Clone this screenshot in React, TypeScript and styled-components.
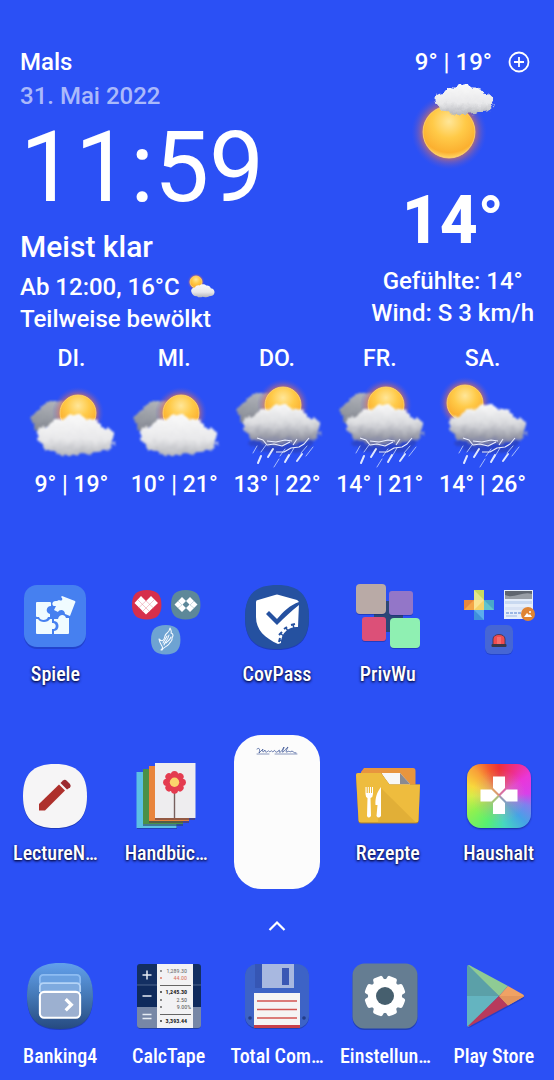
import React from "react";
import styled, { createGlobalStyle } from "styled-components";

const GlobalStyle = createGlobalStyle`
  *, *::before, *::after { box-sizing: border-box; }
  html, body { margin: 0; padding: 0; background: #2b50f5; }
  body { font-family: Roboto, "Liberation Sans", sans-serif; color: #fff; }
`;

/* ---------- layout ---------- */

const Screen = styled.main`
  display: flex;
  flex-direction: column;
  min-height: 100vh;
  padding: 45px 0 11px;
  background: #2b50f5;
`;

const Weather = styled.section`
  display: flex;
  flex-direction: column;
  gap: 8px;
  padding: 0 20px;
`;

const Current = styled.div`
  display: flex;
  justify-content: space-between;
`;

const Place = styled.div`
  display: flex;
  flex-direction: column;
`;

const Conditions = styled.div`
  display: flex;
  flex-direction: column;
  align-items: center;
`;

const Line = styled.p<{ $size?: number; $height?: number; $weight?: number; $faded?: boolean }>`
  display: flex;
  align-items: center;
  gap: 8px;
  margin: 0;
  font-size: ${(p) => p.$size ?? 24}px;
  line-height: ${(p) => p.$height ?? 32}px;
  font-weight: ${(p) => p.$weight ?? 500};
  color: ${(p) => (p.$faded ? "#aab9fb" : "#fff")};
  white-space: nowrap;
`;

const Clock = styled.time`
  font-size: 98px;
  line-height: 110px;
  font-weight: 400;
`;

const RangeRow = styled.div`
  display: flex;
  align-items: center;
  align-self: flex-end;
  gap: 16px;
  height: 34px;
  padding-right: 4px;
`;

const IconButton = styled.button`
  display: flex;
  padding: 0;
  border: 0;
  background: none;
  color: inherit;
  cursor: pointer;
`;

const Forecast = styled.ul`
  display: grid;
  grid-template-columns: repeat(5, 1fr);
  margin: 0;
  padding: 0;
  list-style: none;
`;

const Day = styled.li`
  display: flex;
  flex-direction: column;
  align-items: center;
`;

const AppGrid = styled.section`
  display: flex;
  flex-direction: column;
  gap: 49px;
  padding-top: 80px;
`;

const AppRow = styled.div`
  display: grid;
  grid-template-columns: repeat(5, 1fr);
  align-items: center;
`;

const Dock = styled.nav`
  display: grid;
  grid-template-columns: repeat(5, 1fr);
  padding: 0 6px;
`;

const AppButton = styled.button<{ $dock?: boolean }>`
  display: flex;
  flex-direction: column;
  align-items: center;
  gap: ${(p) => (p.$dock ? 15 : 13)}px;
  min-width: 0;
  padding: ${(p) => (p.$dock ? 0 : 4)}px 0 0;
  border: 0;
  background: none;
  color: #fff;
  font-family: "Roboto Condensed", "Liberation Sans Narrow", Roboto, sans-serif;
  font-size: 20px;
  font-weight: 500;
  line-height: 24px;
  text-shadow: ${(p) => (p.$dock ? "none" : "0 1px 3px rgba(0, 0, 40, 0.9), 0 1px 2px rgba(0, 0, 40, 0.5)")};
  cursor: pointer;
`;

const Label = styled.span`
  height: 24px;
  white-space: nowrap;
`;

const Art = styled.svg`
  display: block;
  overflow: visible;
`;

const HueTile = styled.span`
  display: block;
  width: 64px;
  height: 64px;
  border-radius: 14px;
  background:
    radial-gradient(circle, rgba(200, 160, 150, 0.7) 0, rgba(200, 160, 150, 0) 60%),
    conic-gradient(from 0deg, #ee3038, #ee2f90 32deg, #ea36d8 55deg, #d840ea 85deg, #7f80ee 108deg, #46a2e6 135deg, #46d8c0 170deg, #58f070 205deg, #90f050 240deg, #d8ec48 270deg, #f8d83c 290deg, #f8a038 318deg, #f4582f 340deg, #ee3038);
  box-shadow: 0 1px 2px rgba(0, 0, 40, 0.45);
`;

const NoteWidget = styled.button`
  justify-self: center;
  display: flex;
  justify-content: center;
  width: 86px;
  height: 154px;
  padding: 11px 0 0;
  border: 0;
  border-radius: 27px;
  background: #fcfcfc;
  cursor: pointer;
`;

const Drawer = styled.button`
  display: flex;
  align-items: center;
  justify-content: center;
  height: 74px;
  padding: 0;
  border: 0;
  background: none;
  cursor: pointer;
`;

const DefsSvg = styled.svg`
  display: block;
`;

/* ---------- weather drawings ---------- */

const Defs = () => (
  <DefsSvg width="0" height="0" aria-hidden="true">
    <defs>
      <radialGradient id="sun" cx="50%" cy="30%" r="70%">
        <stop offset="0" stopColor="#ffe698" />
        <stop offset="0.45" stopColor="#ffca48" />
        <stop offset="0.85" stopColor="#fbb030" />
        <stop offset="1" stopColor="#ffd665" />
      </radialGradient>
      <radialGradient id="glow">
        <stop offset="0.6" stopColor="#f0812e" stopOpacity="0.95" />
        <stop offset="0.78" stopColor="#c06a78" stopOpacity="0.45" />
        <stop offset="1" stopColor="#5a58d0" stopOpacity="0" />
      </radialGradient>
      <linearGradient id="white" x1="0" y1="0" x2="0" y2="1">
        <stop offset="0" stopColor="#fafafa" />
        <stop offset="0.6" stopColor="#e8e8ea" />
        <stop offset="1" stopColor="#b2b4ba" />
      </linearGradient>
      <linearGradient id="storm" x1="0" y1="0" x2="0" y2="1">
        <stop offset="0" stopColor="#fafafa" />
        <stop offset="0.45" stopColor="#dadbde" />
        <stop offset="0.78" stopColor="#9a9ca8" />
        <stop offset="1" stopColor="#646ca8" />
      </linearGradient>
      <linearGradient id="grey" x1="0" y1="0" x2="0" y2="1">
        <stop offset="0" stopColor="#b4b7bc" />
        <stop offset="1" stopColor="#848892" />
      </linearGradient>
      <filter id="fluff" x="-10%" y="-15%" width="120%" height="130%" colorInterpolationFilters="sRGB">
        <feTurbulence type="fractalNoise" baseFrequency="0.14" numOctaves="3" seed="4" result="n" />
        <feDisplacementMap in="SourceGraphic" in2="n" scale="7" xChannelSelector="R" yChannelSelector="G" result="d" />
        <feGaussianBlur in="d" stdDeviation="1" />
      </filter>
    </defs>
  </DefsSvg>
);

const Sun = ({ x, y, r }: { x: number; y: number; r: number }) => (
  <g>
    <circle cx={x} cy={y} r={r * 1.45} fill="url(#glow)" />
    <circle cx={x} cy={y} r={r} fill="url(#sun)" stroke="#ffd873" strokeWidth="0.8" />
  </g>
);

const CLOUD =
  "M1 24 C-1 17 5 12 13 12 C16 5 23 3 28 5 C34 -1 46 -1 51 5 C58 4 64 7 66 13 C75 14 80 21 78 28 C77 35 69 38 61 38 C54 42 44 42 39 40 C31 43 24 42 20 38 C11 39 3 33 1 24Z";

type Sky = "cloudy" | "stormy" | "sunnyStorm";

const WeatherIcon = ({ kind }: { kind: Sky }) => {
  const rain = kind !== "cloudy";
  return (
    <Art width="94" height="94" viewBox="0 -2 94 94" role="img" aria-label={rain ? "Gewitter" : "Bewölkt"}>
      {kind !== "sunnyStorm" && (
        <path
          transform={rain ? "translate(0 -8)" : undefined}
          d="M8 46 C5 38 11 34 17 33 C19 25 27 23 34 23 C42 22 45 30 42 38 C40 48 28 48 22 51 C16 56 8 52 8 46Z"
          fill="url(#grey)"
          filter="url(#fluff)"
        />
      )}
      {kind === "cloudy" && <Sun x={54} y={36} r={18} />}
      {kind === "stormy" && <Sun x={53} y={28} r={18} />}
      {kind === "sunnyStorm" && <Sun x={29} y={26} r={18} />}
      {rain ? (
        <>
          <ellipse cx="52" cy="66" rx="32" ry="10" fill="#2c3fae" opacity="0.6" filter="url(#fluff)" />
          <path transform="translate(12 27)" d={CLOUD} fill="url(#storm)" filter="url(#fluff)" />
          <g stroke="#a8bcfa" strokeLinecap="round" fill="none">
            <path strokeWidth="1" d="M27 69 L23 76 M36 68 L31 75 M55 72 L50 79 M77 69 L71 76 M83 70 L76 79 M64 71 L58 81 M49 82 L44 90" />
            <path stroke="#e0e8ff" strokeWidth="2" d="M31 79 L28 86 M43 72 L38 80 M59 78 L55 85 M72 77 L67 84" />
          </g>
          <path
            d="M27 61 L33 63 L37 68 L44 67 L52 69 L60 65 M37 64 L46 65 L55 63 L62 64 M79 61 L74 67 L69 70 L61 71 L54 75 L46 75 M67 62 L63 68"
            fill="none"
            stroke="#eceffe"
            strokeWidth="1.1"
            strokeLinejoin="round"
          />
        </>
      ) : (
        <path transform="translate(12 37)" d={CLOUD} fill="url(#white)" filter="url(#fluff)" />
      )}
    </Art>
  );
};

const CurrentSky = () => (
  <Art width="110" height="98" viewBox="0 0 110 98" role="img" aria-label="Meist klar">
    <Sun x={51} y={53} r={26} />
    <path transform="translate(36 5) scale(0.76 0.74)" d={CLOUD} fill="url(#white)" filter="url(#fluff)" />
  </Art>
);

const MiniSky = () => (
  <Art width="28" height="24" viewBox="0 0 28 24" aria-hidden="true">
    <Sun x={8} y={7} r={6} />
    <path transform="translate(3 9) scale(0.3 0.32)" d={CLOUD} fill="url(#white)" />
  </Art>
);

/* ---------- app drawings ---------- */

const SQUIRCLE = "M32 0 C54 0 64 10 64 32 C64 54 54 64 32 64 C10 64 0 54 0 32 C0 10 10 0 32 0Z";

const Shade = () => <path d={SQUIRCLE} transform="translate(0 1)" fill="#10207a" opacity="0.45" />;

const SpieleArt = () => (
  <Art width="64" height="64" viewBox="0 0 64 64">
    <rect x="1" y="1" width="62" height="63" rx="13" fill="#1d3bb4" opacity="0.6" />
    <rect x="1" y="0" width="62" height="62" rx="13" fill="#4680f0" />
    <g fill="#f0fbff">
      <path d="M14 17 H27 Q28 17 28 18 V21 C23 21 22 28 27 29 V32 H25 C24 36 17 36 16 32 H14 Q13 32 13 31 V18 Q13 17 14 17Z" />
      <path d="M13 34 H15 C17 38 25 38 27 34 H29 V38 C34 37 34 45 29 44 V49 H14 Q13 49 13 48Z" />
      <path d="M31 36 V34 H35 C36 29 42 29 43 33 H46 V48 Q46 49 45 49 H31 V46 C37 46 37 36 31 36Z" />
      <path d="M39 11 L52 16 Q53 17 52 18 L47 31 L42 29 C42 24 36 24 35 27 L31 25 L33 21 C28 22 28 15 34 16 L36 15 C40 17 40 13 38 12Z" />
    </g>
  </Art>
);

const GamesFolderArt = () => (
  <Art width="64" height="64" viewBox="0 0 64 64">
    <path d={SQUIRCLE} transform="translate(-2 5) scale(0.46)" fill="#d62f4c" />
    <path d="M7 11 L12 16 L17 11 L24 18 L12 29.5 L0.5 18Z" fill="#fff" />
    <path
      d="M3.500 14.500 L15.500 26.500 M8 12 L19.500 23 M12 12 M20.500 14.500 L8.500 26.500 M16 12 L4.500 23"
      fill="none"
      stroke="#e58a9b"
      strokeWidth="0.5"
    />
    <path d={SQUIRCLE} transform="translate(37 5) scale(0.46)" fill="#5d8899" />
    <path
      d="M40.500 19.500 L48 12 L52 16 L48.500 19.500 L52 23 L48 27Z M52 16 L56 12 L63.500 19.500 L56 27 L52 23 L55.500 19.500Z"
      fill="#fff"
    />
    <path d="M44 16 L48 20 L44 23 M60 16 L56 20 L60 23" fill="none" stroke="#9db9c2" strokeWidth="0.5" />
    <path d={SQUIRCLE} transform="translate(17 40) scale(0.46)" fill="#6ea3d2" />
    <g fill="none" stroke="#f4faff" strokeWidth="1.1" strokeLinecap="round" strokeLinejoin="round">
      <path d="M27 65 C31 62 26 61 25 54 C28 57 30 56 31 51 C32 47 35 49 36 43 C38 47 37 48 37 48 C40 49 39 51 38 53 C39 56 36 57 35 59 C33 62 29 62 28 65" />
      <path d="M30 60 C31 56 34 55 35 50 M32 58 C34 56 36 55 37 52 M29 58 C30 56 32 53 33 51" />
    </g>
  </Art>
);

const CovPassArt = () => (
  <Art width="64" height="64" viewBox="0 0 64 64">
    <Shade />
    <path d={SQUIRCLE} fill="#2551a0" />
    <path
      d="M30 10 Q32 9 34 10 L52 15 Q54 16 54 18 L53 42 C46 41 36 46 36 58 L33 59 C20 53 11 45 11 32 V17 Q11 15 13 15Z"
      fill="#fff"
    />
    <path d="M21 29 L24 26 L32 34 C38 27 45 20 54 17 V20 C46 26 39 33 32 40Z" fill="#2551a0" />
    <g stroke="#2551a0" strokeWidth="1.4" fill="none">
      <path d="M38 57 L35 55 M39 51 L36 49 M43 46 L41 43 M49 43 L48 40" />
      <path strokeWidth="2" d="M34 57 L35 53 M34 50 L37 47 M39 44 L42 42 M46 40 L50 39" />
    </g>
  </Art>
);

const PrivWuArt = () => (
  <Art width="64" height="64" viewBox="0 0 64 64">
    <path d="M28 16 H38 V26 H47 V36 H38 V47 H28 V36 H18 V26 H28Z" fill="#2c4776" />
    <g fill="#10207a" opacity="0.4">
      <rect x="0" y="1" width="30" height="29" rx="4" />
      <rect x="33" y="8" width="24" height="23" rx="3" />
      <rect x="6" y="34" width="24" height="23" rx="3" />
      <rect x="34" y="35" width="30" height="29" rx="4" />
    </g>
    <rect x="0" y="-1" width="30" height="30" rx="4" fill="#b9aaa6" />
    <rect x="33" y="6" width="24" height="24" rx="3" fill="#9376c8" />
    <rect x="6" y="32" width="24" height="24" rx="3" fill="#dc5078" />
    <rect x="34" y="33" width="30" height="30" rx="4" fill="#8ff0b2" />
  </Art>
);

const ToolsFolderArt = () => (
  <Art width="64" height="64" viewBox="0 0 64 64">
    <rect x="7" y="5" width="10" height="10" fill="#c8d860" />
    <path d="M7 5 L17 15 H7Z" fill="#e2e58a" />
    <rect x="-3" y="15" width="10" height="10" fill="#e8883c" />
    <path d="M-3 25 L7 15 V25Z" fill="#f4a648" />
    <rect x="7" y="15" width="10" height="10" fill="#fbe492" />
    <path d="M7 25 L17 15 V25Z" fill="#f6d468" />
    <rect x="17" y="15" width="10" height="10" fill="#4aa8c8" />
    <path d="M17 15 L27 25 H17Z" fill="#62c4cc" />
    <rect x="7" y="25" width="10" height="10" fill="#3f90dc" />
    <path d="M7 25 L17 35 V25Z" fill="#5cacec" />

    <rect x="37" y="5" width="29" height="29" fill="#e6eefa" />
    <rect x="38" y="6" width="27" height="8" fill="#5f6670" />
    <path d="M38 10 C46 14 56 6 65 9 V14 H38Z" fill="#989ea6" />
    <rect x="38" y="16" width="27" height="3" fill="#c9d9f0" />
    <rect x="38" y="22" width="20" height="3" fill="#d8e2f4" />
    <path d="M39 28 H56" stroke="#4f7ed0" strokeWidth="1" strokeDasharray="3 1" />
    <path d="M39 31 H50" stroke="#9db9e4" strokeWidth="1" />
    <circle cx="61" cy="29" r="7" fill="#e08432" />
    <path d="M57 32 L60 28 L62 30 L63 29 L65 32Z" fill="#fff" />
    <circle cx="63" cy="27" r="1" fill="#fff" />

    <rect x="18" y="41" width="28" height="29" rx="6" fill="#1c37a6" opacity="0.5" />
    <rect x="18" y="40" width="28" height="29" rx="6" fill="#4666d4" />
    <path d="M26 60 V54 C26 48 38 48 38 54 V60Z" fill="#f04c50" stroke="#39324a" strokeWidth="0.8" />
    <path d="M31 52 V60 M33 52 V60" stroke="#ff9a98" strokeWidth="0.8" />
    <rect x="24.5" y="59" width="15" height="3" rx="1" fill="#39384a" />
  </Art>
);

const LectureArt = () => (
  <Art width="64" height="64" viewBox="0 0 64 64">
    <Shade />
    <path d={SQUIRCLE} fill="#f6f5f6" />
    <path d="M16 40 L36 20.500 L42 26.500 L22 46.500 H16Z" fill="#ae302c" />
    <path d="M37.500 19 L40 16.500 Q42 15 44 17 L47 20 Q48.500 22 47 23.500 L44 25.500Z" fill="#9c2a30" />
  </Art>
);

const HandbookArt = () => (
  <Art width="64" height="64" viewBox="0 0 64 64">
    <rect x="3" y="9" width="40" height="56" fill="#183078" opacity="0.5" />
    <rect x="2.5" y="8" width="40" height="56" fill="#5cc0e4" />
    <rect x="9" y="5" width="40" height="57" fill="#2b4860" opacity="0.6" />
    <rect x="9" y="5" width="40" height="55" fill="#4a9048" />
    <rect x="15" y="2" width="40" height="57" fill="#5a3c48" opacity="0.6" />
    <rect x="15" y="2" width="40" height="55" fill="#e8843c" />
    <rect x="21" y="-1" width="40" height="57" fill="#5a3c48" opacity="0.6" />
    <rect x="21" y="-1" width="40.5" height="55" fill="#eeedef" />
    <path d="M40.500 24 V54" stroke="#77605e" strokeWidth="1.4" />
    <g fill="#e43c50">
      {[0, 45, 90, 135, 180, 225, 270, 315].map((a) => (
        <circle key={a} cx="40.5" cy="10.5" r="3.600" transform={`rotate(${a} 40.5 18.3)`} />
      ))}
      <circle cx="40.5" cy="18.3" r="8" />
    </g>
    <circle cx="40.5" cy="18.3" r="4.7" fill="#fbd46c" />
  </Art>
);

const RecipesArt = () => (
  <Art width="64" height="64" viewBox="0 0 64 64">
    <path d="M8 4 H57 Q59.500 4 59.500 7 V24 H5 V8Z" fill="#e8953e" />
    <path d="M25.500 9 H44 L54 20 V24 H34Z" fill="#f7f7f7" />
    <path d="M44 9 L54 20 H44Z" fill="#8a8a90" />
    <path d="M0 11 Q0 9 2 9 H25 L33.500 20.500 H64 L62.500 57 Q62.500 59.500 60 59.500 H5 Q2.500 59.500 2.500 57Z" fill="#a87a2a" />
    <path d="M0 11 Q0 9 2 9 H25 L33.500 20.500 H64 L62.500 56 Q62.500 58.500 60 58.500 H5 Q2.500 58.500 2.500 56Z" fill="#eebc3e" />
    <path d="M25 24 L60 58.500 H22 L23 26Z" fill="#d9a634" opacity="0.6" />
    <path
      d="M9.500 23 V30 Q9.500 33 11.500 34 L11 52 Q12.500 55 15 52 L14.500 34 Q17 33 17 30 V23 H16 V29 H15 V23 H14 V29 H12.800 V23 H11.800 V29 H10.600 V23Z"
      fill="#fff"
    />
    <path d="M25 23 C21 28 19 34 19.500 41 H21.500 L20.500 52 Q22.500 55 25 52Z" fill="#fff" />
  </Art>
);

const HouseholdArt = () => (
  <HueTile>
    <Art width="64" height="64" viewBox="0 0 64 64">
      <path
        fill="#fff"
        d="M26 12.500 H38 V24 L32 30 L26 24Z M26 50 V39 L32 33 L38 39 V50Z M13.500 25.500 H24.500 L30.500 31.500 L24.500 37.500 H13.500Z M50.500 25.500 V37.500 H39.500 L33.500 31.500 L39.500 25.500Z"
      />
    </Art>
  </HueTile>
);

const BankingArt = () => (
  <Art width="66" height="66" viewBox="0 0 64 64">
    <defs>
      <linearGradient id="bank" x1="0" y1="0" x2="0" y2="1">
        <stop offset="0" stopColor="#62a0ec" />
        <stop offset="0.5" stopColor="#4478b6" />
        <stop offset="1" stopColor="#264a80" />
      </linearGradient>
    </defs>
    <Shade />
    <path d={SQUIRCLE} fill="url(#bank)" />
    <path d="M12.500 20 V15 Q12.500 11.500 16 11.500 H48 Q51.500 11.500 51.500 15 V20" fill="#6aa0e0" stroke="#8dbcf2" strokeWidth="1.8" />
    <path d="M12.500 28 V23 Q12.500 19.500 16 19.500 H48 Q51.500 19.500 51.500 23 V28" fill="#7eaadf" stroke="#b4d3f6" strokeWidth="1.8" />
    <rect x="12.5" y="28" width="39" height="25" rx="4" fill="#9cb0d0" stroke="#fff" strokeWidth="2" />
    <path d="M37.500 35 L43 40.500 L37.500 46" fill="none" stroke="#fff" strokeWidth="3.2" />
  </Art>
);

const tape: [string, number, string, number][] = [
  ["1,289.30", 10, "#666", 400],
  ["44.00", 17, "#d8705c", 400],
  ["1,245.30", 31, "#222", 700],
  ["2.50", 39, "#555", 400],
  ["9.00%", 46, "#555", 400],
  ["3,393.44", 60, "#222", 700],
];

const CalcArt = () => (
  <Art width="66" height="66" viewBox="0 0 66 66">
    <rect x="1" y="2" width="64" height="64" rx="4" fill="#183078" opacity="0.6" />
    <path d="M1 22 V4 Q1 1 4 1 H62 Q65 1 65 4 V22Z" fill="#132f62" />
    <rect x="1" y="22" width="64" height="22" fill="#0f2a5c" />
    <path d="M1 44 H65 V62 Q65 65 62 65 H4 Q1 65 1 62Z" fill="#7787a6" />
    <path d="M1 22 H65" stroke="#5b7198" strokeWidth="0.8" />
    <path d="M6.500 12 H15.500 M11 7.500 V16.500 M6.500 33 H15.500 M6.500 51.500 H15.500 M6.500 55.500 H15.500" stroke="#e6ecf4" strokeWidth="1.5" />
    <rect x="21" y="1" width="36" height="64" fill="#f2f2f4" />
    {tape.map(([value, y, fill, weight]) => (
      <g key={y} fill={fill} fontFamily="Roboto Condensed, Roboto, sans-serif" fontSize="6" fontWeight={weight}>
        <text x={value.endsWith("%") ? 55 : 51} y={y} textAnchor="end">{value}</text>
        <circle cx="25" cy={y - 2} r="0.9" />
      </g>
    ))}
    <path d="M24 22.500 H55 M24 51.500 H55" stroke="#555" strokeWidth="0.9" />
  </Art>
);

const CommanderArt = () => (
  <Art width="66" height="66" viewBox="0 0 66 66">
    <rect x="1" y="2" width="64" height="64" rx="12" fill="#183078" opacity="0.5" />
    <rect x="1" y="1" width="64" height="64" rx="12" fill="#3d63c6" />
    <rect x="11" y="1" width="39" height="24" fill="#3656b4" />
    <rect x="18" y="1" width="32" height="24" fill="#a8b8e0" />
    <rect x="38" y="5" width="7" height="17" fill="#3a57b4" />
    <rect x="10" y="30" width="46" height="32" fill="#f5f4f4" />
    <rect x="10" y="62" width="46" height="3" fill="#c8404a" />
    <path d="M13 38 H53 M13 46.500 H53 M13 55 H53" stroke="#d25450" strokeWidth="1.7" />
    <circle cx="6" cy="55" r="1.8" fill="#223c88" />
    <circle cx="60" cy="55" r="1.8" fill="#223c88" />
  </Art>
);

const SettingsArt = () => (
  <Art width="66" height="66" viewBox="0 0 66 66">
    <rect x="0.5" y="2" width="65" height="65" rx="12" fill="#183078" opacity="0.5" />
    <rect x="0.5" y="0.5" width="65" height="65" rx="12" fill="#657d92" />
    <circle cx="33" cy="33" r="17" fill="#fff" />
    {[22.5, 67.5, 112.5, 157.5, 202.5, 247.5, 292.5, 337.5].map((a) => (
      <path
        key={a}
        transform={`rotate(${a} 33 33)`}
        d="M27 20 L28 14 Q28.500 12.800 29.500 12.700 Q33 12.300 36.500 12.700 Q37.500 12.800 38 14 L39 20Z"
        fill="#fff"
      />
    ))}
    <circle cx="33" cy="33" r="9" fill="#465f6e" />
  </Art>
);

const PlayArt = () => (
  <Art width="66" height="66" viewBox="0 0 66 66">
    <path d="M6 6 Q6 2 9 4 L62 32 Q64 34 62 36 L10 64 Q6 66 6 62Z" fill="#10207a" opacity="0.35" />
    <path d="M6 4 Q6 1 9 2.500 L38 33 H6Z" fill="#5ba0a8" />
    <path d="M6 33 H38 L9 63 Q6 65 6 62Z" fill="#64b4c0" />
    <path d="M7 2 L9 2.500 L47 23 L38 33Z" fill="#8fcb94" />
    <path d="M38 33 L47 42.500 L10 62.500 Q8 63.500 7 63Z" fill="#b83a5c" />
    <path d="M47 23 L62 31.500 Q64 33 62 34 L47 42.500 L38 33Z" fill="#f0a264" />
    <path d="M38 33 H63 Q63 33.500 62 34 L47 42.500Z" fill="#e4955c" />
  </Art>
);

/* ---------- content ---------- */

const forecast: { day: string; range: string; kind: Sky }[] = [
  { day: "DI.", range: "9° | 19°", kind: "cloudy" },
  { day: "MI.", range: "10° | 21°", kind: "cloudy" },
  { day: "DO.", range: "13° | 22°", kind: "stormy" },
  { day: "FR.", range: "14° | 21°", kind: "stormy" },
  { day: "SA.", range: "14° | 26°", kind: "sunnyStorm" },
];

type ShortcutProps = { name?: string; art: React.ReactNode; dock?: boolean; title?: string };

const Shortcut = ({ name, art, dock, title }: ShortcutProps) => (
  <AppButton type="button" $dock={dock} aria-label={title}>
    {art}
    <Label>{name}</Label>
  </AppButton>
);

export default function App() {
  return (
    <>
      <GlobalStyle />
      <Defs />
      <Screen>
        <Weather>
          <Current>
            <Place>
              <Line $height={34}>Mals</Line>
              <Line $height={34} $faded>31. Mai 2022</Line>
              <Clock>11:59</Clock>
              <Line $size={30} $height={48}>Meist klar</Line>
              <Line>Ab 12:00, 16°C <MiniSky /></Line>
              <Line>Teilweise bewölkt</Line>
            </Place>
            <Conditions>
              <RangeRow>
                <Line>9° | 19°</Line>
                <IconButton type="button" aria-label="Hinzufügen">
                  <svg width="22" height="22" viewBox="0 0 22 22" fill="none" stroke="currentColor" strokeWidth="1.8">
                    <circle cx="11" cy="11" r="9.5" />
                    <path d="M11 6 V16 M6 11 H16" />
                  </svg>
                </IconButton>
              </RangeRow>
              <CurrentSky />
              <Line $size={66} $height={88} $weight={800}>14°</Line>
              <Line>Gefühlte: 14°</Line>
              <Line>Wind: S 3 km/h</Line>
            </Conditions>
          </Current>
          <Forecast>
            {forecast.map((f) => (
              <Day key={f.day}>
                <Line $size={23}>{f.day}</Line>
                <WeatherIcon kind={f.kind} />
                <Line $size={23}>{f.range}</Line>
              </Day>
            ))}
          </Forecast>
        </Weather>

        <AppGrid>
          <AppRow>
            <Shortcut name="Spiele" art={<SpieleArt />} />
            <Shortcut title="Ordner Spiele" art={<GamesFolderArt />} />
            <Shortcut name="CovPass" art={<CovPassArt />} />
            <Shortcut name="PrivWu" art={<PrivWuArt />} />
            <Shortcut title="Ordner Werkzeuge" art={<ToolsFolderArt />} />
          </AppRow>
          <AppRow>
            <Shortcut name="LectureN…" art={<LectureArt />} />
            <Shortcut name="Handbüc…" art={<HandbookArt />} />
            <NoteWidget type="button" aria-label="Notiz">
              <svg width="44" height="12" viewBox="0 0 44 12" fill="none" stroke="#3c5596" strokeWidth="0.8" strokeLinecap="round">
                <path d="M2 3 C5 1 5 4 4 7 C7 4 8 3 8 3 C7 6 8 7 10 4 C10 6 11 7 13 5 C14 4 14 7 16 5 C17 4 17 7 19 5 C20 3 20 7 22 6 C24 5 25 2 24 6 C26 7 27 4 29 1 C29 3 26 7 28 6 C30 5 31 2 33 1 C32 3 30 7 32 6 C34 4 35 7 37 5 C38 5 38 7 41 7" />
                <path d="M2 8 H14 M20 8 H42" strokeWidth="0.6" />
              </svg>
            </NoteWidget>
            <Shortcut name="Rezepte" art={<RecipesArt />} />
            <Shortcut name="Haushalt" art={<HouseholdArt />} />
          </AppRow>
        </AppGrid>

        <Drawer type="button" aria-label="Alle Apps">
          <svg width="18" height="12" viewBox="0 0 18 12" fill="none" stroke="#fff" strokeWidth="2.2">
            <path d="M1.500 10 L9 2.500 L16.500 10" />
          </svg>
        </Drawer>

        <Dock>
          <Shortcut dock name="Banking4" art={<BankingArt />} />
          <Shortcut dock name="CalcTape" art={<CalcArt />} />
          <Shortcut dock name="Total Com…" art={<CommanderArt />} />
          <Shortcut dock name="Einstellun…" art={<SettingsArt />} />
          <Shortcut dock name="Play Store" art={<PlayArt />} />
        </Dock>
      </Screen>
    </>
  );
}
